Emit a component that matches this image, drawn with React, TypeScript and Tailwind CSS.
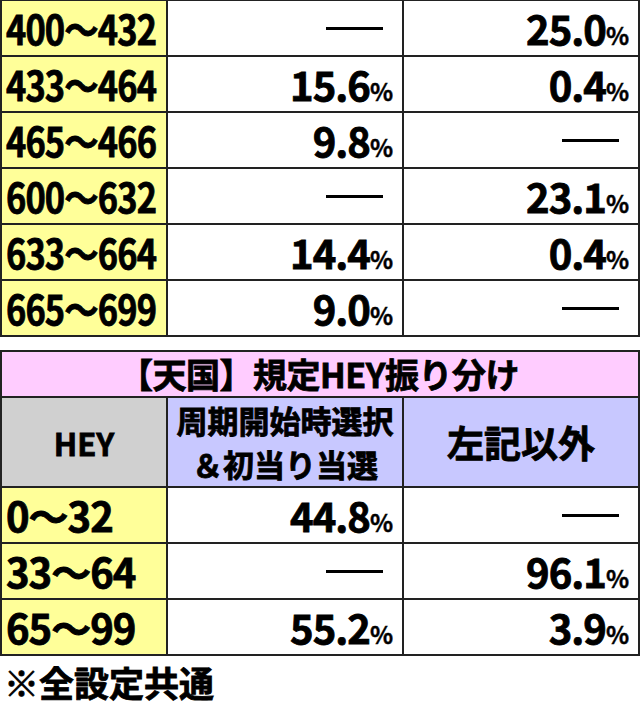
import React from "react";

const font = { fontFamily: '"Noto Sans CJK JP", "Noto Sans", sans-serif' };

type Row = { label: string; a: string | null; b: string | null };

const top: Row[] = [
  { label: "400～432", a: null, b: "25.0" },
  { label: "433～464", a: "15.6", b: "0.4" },
  { label: "465～466", a: "9.8", b: null },
  { label: "600～632", a: null, b: "23.1" },
  { label: "633～664", a: "14.4", b: "0.4" },
  { label: "665～699", a: "9.0", b: null },
];

const bottom: Row[] = [
  { label: "0～32", a: "44.8", b: null },
  { label: "33～64", a: null, b: "96.1" },
  { label: "65～99", a: "55.2", b: "3.9" },
];

function Value({ v }: { v: string | null }) {
  if (v === null) {
    return (
      <div className="bg-white flex items-center justify-end pr-[19px]">
        <span className="block w-[57px] h-[3px] bg-black" aria-label="—" />
      </div>
    );
  }
  return (
    <div className="bg-white flex items-center justify-end pr-[9px]">
      <span className="whitespace-nowrap text-[40px] font-bold leading-none tracking-[-1px] [-webkit-text-stroke:0.8px_black]">
        {v}
        <span className="text-[24px] tracking-normal [-webkit-text-stroke:0.4px_black]">%</span>
      </span>
    </div>
  );
}

export default function App() {
  return (
    <div className="w-[640px] h-[708px] bg-white text-black overflow-hidden" style={font}>
      <div className="bg-[#222] pt-[1px] px-[2px] pb-[2px] grid grid-cols-[164px_234px_234px] gap-[2px] auto-rows-[54px]">
        {top.map((r) => (
          <React.Fragment key={r.label}>
            <div className="bg-[#ffff99] flex items-center pl-[4px]">
              <span className="inline-block origin-left scale-x-[0.86] whitespace-nowrap text-[40px] font-bold leading-none tracking-[-1px] [-webkit-text-stroke:0.8px_black]">
                {r.label}
              </span>
            </div>
            <Value v={r.a} />
            <Value v={r.b} />
          </React.Fragment>
        ))}
      </div>
      <div className="h-[13px]" />
      <div className="bg-[#222] p-[2px] grid grid-cols-[164px_234px_234px] gap-[2px]">
        <div className="col-span-3 h-[44px] bg-[#ffccff] flex items-center justify-center pr-[2px]">
          <span className="whitespace-nowrap text-[34px] font-bold leading-none tracking-[-0.5px] [-webkit-text-stroke:0.8px_black]">【天国】規定HEY振り分け</span>
        </div>
        <div className="h-[88px] bg-[#d0d0d0] flex items-center justify-center">
          <span className="text-[31px] font-bold leading-none [-webkit-text-stroke:0.8px_black]">HEY</span>
        </div>
        <div className="h-[88px] bg-[#c8c8ff] flex flex-col items-center justify-center">
          <span className="whitespace-nowrap text-[31px] font-bold leading-[44px] [-webkit-text-stroke:0.8px_black]">周期開始時選択</span>
          <span className="whitespace-nowrap text-[31px] font-bold leading-[44px] [-webkit-text-stroke:0.8px_black]">＆初当り当選</span>
        </div>
        <div className="h-[88px] bg-[#c8c8ff] flex items-center justify-center">
          <span className="whitespace-nowrap text-[37px] font-bold leading-none [-webkit-text-stroke:0.8px_black]">左記以外</span>
        </div>
        {bottom.map((r) => (
          <React.Fragment key={r.label}>
            <div className="h-[54px] bg-[#ffff99] flex items-center pl-[4px]">
              <span className="whitespace-nowrap text-[40px] font-bold leading-none tracking-[-1px] [-webkit-text-stroke:0.8px_black]">
                {r.label}
              </span>
            </div>
            <Value v={r.a} />
            <Value v={r.b} />
          </React.Fragment>
        ))}
      </div>
      <div className="h-[51px] flex items-center pl-[4px]">
        <span className="whitespace-nowrap text-[35px] font-bold leading-none [-webkit-text-stroke:0.8px_black]">※全設定共通</span>
      </div>
    </div>
  );
}
